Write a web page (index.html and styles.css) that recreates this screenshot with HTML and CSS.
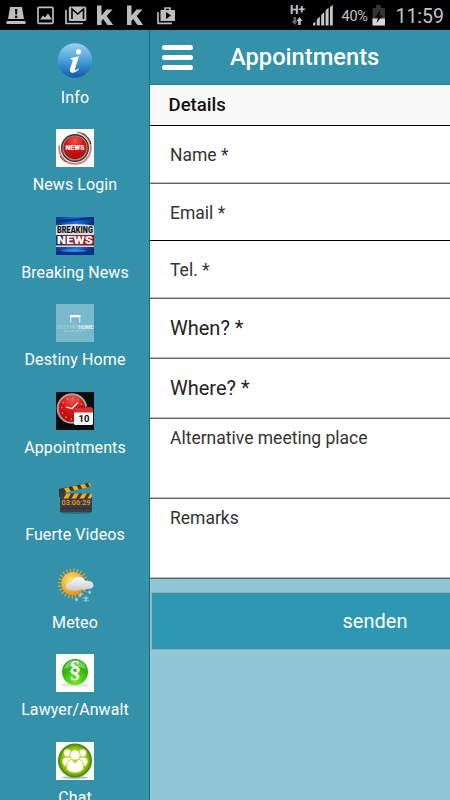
FILE: index.html
```
<!DOCTYPE html>
<html lang="en">
<head>
    <meta charset="UTF-8">
    <meta name="viewport" content="width=device-width, initial-scale=1">
    <title>Appointments</title>
    <link rel="stylesheet" href="styles.css">
</head>
<body>
    <!-- Status bar -->
    <div class="status-bar">
        <svg class="status-icons" width="180" height="30" viewBox="0 0 180 30" fill="#bdbdbd">
            <path d="M10 7h12l2 12H8z"/>
            <path d="M6.500 21h19v3h-19z"/>
            <path d="M15 9h2.400l-.4 5.500h-1.600zM15 15.800h2.300V18H15z" fill="#000"/>
            <rect x="38" y="7.300" width="15" height="16" rx="1" fill="none" stroke="#bdbdbd" stroke-width="1.700"/>
            <path d="M40 19.500l3-4 2 2 3-4 4 6z"/>
            <path d="M66 10v13.500h17" fill="none" stroke="#bdbdbd" stroke-width="1.700"/>
            <rect x="68.800" y="6.500" width="17.500" height="14.500" rx="1.500"/>
            <path d="M72 19V9l5.700 5L83.500 9v10" fill="none" stroke="#000" stroke-width="1.600"/>
            <path d="M97 5.500h4.500v10l5-6h6l-5.800 6.600 6.500 8.900h-5.800l-4.200-6-1.700 1.800V25H97z"/>
            <path d="M127 5.500h4.500v10l5-6h6l-5.800 6.600 6.500 8.900h-5.800l-4.200-6-1.700 1.800V25H127z"/>
            <path d="M158 12v11.300h14" fill="none" stroke="#bdbdbd" stroke-width="1.700"/>
            <path d="M160.500 10h14.500v11h-14.500z"/>
            <path d="M165 10V8h5v2" fill="none" stroke="#bdbdbd" stroke-width="1.700"/>
            <path d="M166 12l5 3.500-5 3.500z" fill="#000"/>
        </svg>
        <div class="status-right">
            <svg width="48" height="30" viewBox="0 0 48 30" fill="#c8c8c8">
                <text class="network" x="3" y="14">H+</text>
                <path d="M6.500 17h2.500v4h1.800L7.800 25l-3.300-4h2z" fill="#666"/>
                <path d="M11.200 25v-4H9.500l3-4 3 4h-1.800v4z"/>
                <path d="M26 25.500v-2l2.300-2v4zM29.800 25.500v-6l3-3v9zM34.200 25.500V15l3-3v13.500zM38.600 25.500v-15l3-3v18zM43 25.500V7l2.800-2v20.500z"/>
            </svg>
            <span class="percent">40%</span>
            <svg class="battery" width="14" height="21" viewBox="0 0 14 21">
                <path d="M4 0h5v3h4v17.500H.5V3H4z" fill="#333"/>
                <path d="M.5 13.500H13v7H.5z" fill="#d6d6d6"/>
                <path d="M8.500 5L3 12.500h3.200L4.500 18l6-7.500H7.200z" fill="#000"/>
            </svg>
            <span class="clock">11:59</span>
        </div>
    </div>

    <div class="app">
        <!-- Side menu -->
        <nav class="sidebar">
            <a class="menu-item">
                <svg class="menu-icon" viewBox="0 0 38 38">
                    <defs>
                        <linearGradient id="blue" x1="0" y1="0" x2="0" y2="1">
                            <stop offset="0" stop-color="#9ad0f2"/>
                            <stop offset=".5" stop-color="#4b9edb"/>
                            <stop offset="1" stop-color="#1258a8"/>
                        </linearGradient>
                    </defs>
                    <circle cx="19" cy="18.500" r="17.200" fill="url(#blue)"/>
                    <circle cx="22.500" cy="9.800" r="2.600" fill="#fff"/>
                    <path d="M14.500 16.200q5-.9 8.500-2.200l-4 13q-.5 2.600 3.200-.7l.7.600q-4 4.700-7.500 3.600-2.300-1-1.300-4l2.700-8q.5-1.500-2.600-1.300z" fill="#fff"/>
                </svg>
                <span>Info</span>
            </a>
            <a class="menu-item">
                <svg class="menu-icon" viewBox="0 0 38 38">
                    <defs>
                        <radialGradient id="red" cx=".5" cy=".2" r=".8">
                            <stop offset="0" stop-color="#f0544c"/>
                            <stop offset=".5" stop-color="#d51212"/>
                            <stop offset="1" stop-color="#b00c0c"/>
                        </radialGradient>
                    </defs>
                    <rect width="38" height="38" fill="#fff"/>
                    <circle cx="19" cy="19" r="15.800" fill="none" stroke="#e47b7b" stroke-width="2" stroke-dasharray="52 24"/>
                    <path d="M26 4a16.500 16.500 0 0 1 9 11M4 27a16.500 16.500 0 0 0 6 6" fill="none" stroke="#333" stroke-width="1"/>
                    <circle cx="19" cy="19" r="14" fill="#333"/>
                    <circle cx="19" cy="19" r="12.600" fill="#999"/>
                    <circle cx="19" cy="18.700" r="11.500" fill="url(#red)"/>
                    <text class="news-text" x="9.500" y="21.300" textLength="19" lengthAdjust="spacingAndGlyphs">NEWS</text>
                </svg>
                <span>News Login</span>
            </a>
            <a class="menu-item">
                <svg class="menu-icon" viewBox="0 0 38 38">
                    <defs>
                        <linearGradient id="night" x1="0" y1="0" x2="1" y2="0">
                            <stop offset="0" stop-color="#123a86"/>
                            <stop offset=".55" stop-color="#147bd8"/>
                            <stop offset="1" stop-color="#082a6d"/>
                        </linearGradient>
                        <linearGradient id="banner" x1="0" y1="0" x2="1" y2="0">
                            <stop offset="0" stop-color="#25306e"/>
                            <stop offset=".5" stop-color="#9a2530"/>
                            <stop offset="1" stop-color="#a80f1a"/>
                        </linearGradient>
                    </defs>
                    <rect width="38" height="38" fill="url(#night)"/>
                    <path d="M0 3l38-3v2L0 6zM0 35q19-5 38-1v4H0z" fill="#0b2d92"/>
                    <path d="M4 34q14-4 28 0-14 2-28 0z" fill="#2d8df0"/>
                    <path d="M0 8.500q19-3 38 0v9.500H0z" fill="#d9dce4"/>
                    <path d="M0 18h38v10.500H0z" fill="url(#banner)"/>
                    <path d="M0 28.500h38v1.500H0z" fill="#d8d4e4"/>
                    <text class="breaking-text" x="1" y="16.300" textLength="36" lengthAdjust="spacingAndGlyphs">BREAKING</text>
                    <text class="breaking-news" x="1" y="27.300" textLength="36" lengthAdjust="spacingAndGlyphs">NEWS</text>
                </svg>
                <span>Breaking News</span>
            </a>
            <a class="menu-item">
                <svg class="menu-icon" viewBox="0 0 38 38">
                    <rect width="38" height="38" fill="#7ab9cc"/>
                    <path d="M14 11h10.500v2.300H14z" fill="#fff"/>
                    <path d="M14.800 13v5.500M23.700 13v5.500" stroke="#d6ebf0" stroke-width="1.200"/>
                    <text class="destiny" x=".5" y="24.500" textLength="37" lengthAdjust="spacingAndGlyphs">DESTINY<tspan class="destiny-home">HOME</tspan></text>
                    <path d="M8 27h22" stroke="#b2d8e2" stroke-width=".8" stroke-dasharray="2 .6"/>
                </svg>
                <span>Destiny Home</span>
            </a>
            <a class="menu-item">
                <svg class="menu-icon" viewBox="0 0 38 38">
                    <rect width="38" height="38" fill="#0c0c0e"/>
                    <circle cx="16" cy="16.500" r="14.300" fill="url(#red)" stroke="#a4a4a4" stroke-width="2"/>
                    <circle cx="16" cy="16.500" r="10.500" fill="none" stroke="#f5a0a0" stroke-width="1.300" stroke-dasharray="1.300 4.200"/>
                    <path d="M10 15l6 1.500 6-6" fill="none" stroke="#fff" stroke-width="1.200"/>
                    <rect x="18" y="16.500" width="19" height="16.500" rx="1.500" fill="#f6f6f6"/>
                    <path d="M18 20.500V17q0-2 2-2h15q2 0 2 2v3.500z" fill="#d82f2f"/>
                    <path d="M20 15h16" stroke="#741515" stroke-width="2" stroke-dasharray="1 1.600"/>
                    <text class="calendar-day" x="28" y="30.200">10</text>
                </svg>
                <span>Appointments</span>
            </a>
            <a class="menu-item">
                <svg class="menu-icon" viewBox="0 0 38 38">
                    <ellipse cx="20" cy="33.500" rx="16" ry="1.500" fill="#23717f"/>
                    <path d="M3 10L34 3.500l1 4L9 13.500 8 18H3z" fill="#34373d"/>
                    <path d="M4 14.500h32v18.500H4z" fill="#3b3e46"/>
                    <path d="M8 9.200l4.500-.9 2.500 4.200-4.500 1zM16 7.500l4.500-.9 2.500 4-4.500 1zM24 5.800l4.500-1 2.500 4-4.500 1zM32 4.200l2.300-.5.700 4-1 .3zM10.500 14.500H15l-3 5H7.500zM18.500 14.500H23l-3 5h-4.500zM26.500 14.500H31l-3 5h-4.500zM34.500 14.500H36v3l-1.300 2h-3.200z" fill="#f2ab17"/>
                    <text class="timecode" x="5.500" y="26.300" textLength="29" lengthAdjust="spacingAndGlyphs">03:06:29</text>
                    <path d="M5 29h30" stroke="#252830" stroke-width="1"/>
                </svg>
                <span>Fuerte Videos</span>
            </a>
            <a class="menu-item">
                <svg class="menu-icon" viewBox="0 0 38 38">
                    <defs>
                        <radialGradient id="sun" cx=".4" cy=".35" r=".7">
                            <stop offset="0" stop-color="#ffe27a"/>
                            <stop offset="1" stop-color="#ef8e0b"/>
                        </radialGradient>
                        <linearGradient id="cloud" x1="0" y1="0" x2="0" y2="1">
                            <stop offset="0" stop-color="#fff"/>
                            <stop offset="1" stop-color="#c8c8d0"/>
                        </linearGradient>
                    </defs>
                    <circle cx="17" cy="16.500" r="13" fill="none" stroke="#e6a32a" stroke-width="4.500" stroke-dasharray="1.200 2.200"/>
                    <circle cx="17" cy="16.500" r="11.500" fill="url(#sun)"/>
                    <path d="M17 23.500q-7 0-7-4 0-4 5.500-4 2-6 7.500-5.500 5 .2 6 4 8-.8 8.500 4 .2 4.500-6.500 4-2 1.500-5.500.5-3 1.500-8.500 1z" fill="url(#cloud)"/>
                    <path d="M30 29v6M27.400 30.500l5.200 3M32.600 30.500l-5.200 3M20.500 31v3M19 32.500h3M24.500 26v3.500M22.800 27.700h3.500M33.500 23.500v3.500M31.800 25.200h3.500" stroke="#a9c9dc" stroke-width="1.300"/>
                </svg>
                <span>Meteo</span>
            </a>
            <a class="menu-item">
                <svg class="menu-icon" viewBox="0 0 38 38">
                    <defs>
                        <radialGradient id="green" cx=".5" cy=".85" r=".8">
                            <stop offset="0" stop-color="#7de62b"/>
                            <stop offset=".6" stop-color="#35bd12"/>
                            <stop offset="1" stop-color="#239c12"/>
                        </radialGradient>
                    </defs>
                    <rect width="38" height="38" fill="#fff"/>
                    <ellipse cx="19" cy="31" rx="14" ry="1.600" fill="#d9e8d0"/>
                    <circle cx="19" cy="18" r="13" fill="url(#green)"/>
                    <path d="M8 15Q10 6 19 6t11 9q-11-5-22 0z" fill="#9be47e" opacity=".65"/>
                    <text class="paragraph" x="19" y="23.300">§</text>
                </svg>
                <span>Lawyer/Anwalt</span>
            </a>
            <a class="menu-item">
                <svg class="menu-icon" viewBox="0 0 38 38">
                    <defs>
                        <radialGradient id="lime">
                            <stop offset="0" stop-color="#c8e000"/>
                            <stop offset=".75" stop-color="#9bc60a"/>
                            <stop offset="1" stop-color="#4f9409"/>
                        </radialGradient>
                    </defs>
                    <rect width="38" height="38" fill="#fff"/>
                    <ellipse cx="19" cy="35.500" rx="13" ry="1.500" fill="#bbb"/>
                    <circle cx="19" cy="18.500" r="16.200" fill="url(#lime)" stroke="#458d0c" stroke-width="1.600"/>
                    <g fill="#fff" stroke="#a8cf08" stroke-width=".8">
                        <path d="M6 20q0-5 6-5 5 0 6 5v4H8zM32 20q0-5-6-5-5 0-6 5v4h10z"/>
                        <circle cx="11.500" cy="11" r="4"/>
                        <circle cx="26.500" cy="11" r="4"/>
                        <path d="M10.500 27q-.5-9 5-9.500l3.500 3.500 3.500-3.500q5.500.5 5 9.500-3.500 4-8.500 4t-8.500-4z"/>
                        <circle cx="19" cy="13" r="5.200"/>
                    </g>
                </svg>
                <span>Chat</span>
            </a>
        </nav>

        <!-- Appointment form, pushed to the right by the menu -->
        <main class="page">
            <header class="page-header">
                <div class="hamburger">
                    <i></i>
                    <i></i>
                    <i></i>
                </div>
                <h1>Appointments</h1>
            </header>
            <h2 class="details">Details</h2>
            <div class="row">Name *</div>
            <div class="row row-solid">Email *</div>
            <div class="row">Tel. *</div>
            <div class="row row-select">When? *</div>
            <div class="row row-select">Where? *</div>
            <div class="row row-area">Alternative meeting place</div>
            <div class="row row-area">Remarks</div>
            <button class="send-button">senden</button>
        </main>
    </div>
</body>
</html>
```
FILE: styles.css
```
* {
    box-sizing: border-box;
}

body {
    margin: 0;
    width: 450px;
    height: 800px;
    overflow: hidden;
    font-family: Roboto, "Liberation Sans", sans-serif;
}

/* Status bar */
.status-bar {
    display: flex;
    justify-content: space-between;
    height: 30px;
    background-color: #000;
    color: #c4c4c4;
}

.status-right {
    display: flex;
    align-items: center;
    padding-right: 6px;
}

.network {
    font-size: 12px;
    font-weight: 700;
}

.percent {
    width: 28px;
    margin-left: 6px;
    padding-top: 3px;
    font-size: 14.5px;
    letter-spacing: -0.2px;
}

.battery {
    margin: 0 9px 0 3px;
}

.clock {
    padding-top: 2px;
    font-size: 19.5px;
}

.app {
    display: flex;
    height: 770px;
    overflow: hidden;
}

/* Side menu */
.sidebar {
    flex: none;
    width: 150px;
    padding-top: 11.5px;
    background-color: #3391a9;
    border-right: 1px solid #136f88;
}

.menu-item {
    display: flex;
    flex-direction: column;
    align-items: center;
    height: 87.5px;
    padding-left: 1px;
    color: #fff;
    font-size: 16px;
    line-height: 20px;
    letter-spacing: 0.1px;
}

.menu-icon {
    width: 38px;
    height: 38px;
    margin-bottom: 8px;
}

/* Lettering inside the menu icons */
.news-text {
    font-size: 7px;
    font-weight: 900;
    fill: #fff;
}

.breaking-text {
    font-size: 9px;
    font-weight: 900;
    fill: #111;
}

.breaking-news {
    font-size: 11px;
    font-weight: 900;
    fill: #fff;
}

.destiny {
    font-size: 5.5px;
    fill: #a8d2de;
}

.destiny-home {
    font-weight: 700;
    fill: #e6f3f6;
}

.calendar-day {
    font-size: 9.5px;
    font-weight: 700;
    fill: #111;
    text-anchor: middle;
}

.timecode {
    font-size: 6.5px;
    font-weight: 500;
    fill: #f09a1a;
}

.paragraph {
    font-family: "Liberation Serif", serif;
    font-size: 24px;
    font-weight: 700;
    fill: #fff;
    text-anchor: middle;
}

/* Page */
.page {
    flex: none;
    width: 450px;
    background-color: #90c9d5;
}

.page-header {
    display: flex;
    align-items: center;
    height: 55px;
    padding-left: 12px;
    background-color: #3391a9;
    border-bottom: 1px solid #14829c;
}

.hamburger {
    display: flex;
    flex-direction: column;
    gap: 5px;
    width: 31px;
}

.hamburger i {
    height: 5px;
    border-radius: 2.5px;
    background-color: #fff;
}

.page-header h1 {
    margin: 0 0 0 37px;
    color: #fff;
    font-size: 23.7px;
    font-weight: 500;
}

.details {
    height: 41px;
    margin: 0;
    padding-left: 18.5px;
    background-color: #f8f8f8;
    border-bottom: 1px solid #000;
    color: #111;
    font-size: 18.6px;
    font-weight: 500;
    line-height: 40px;
}

/* Form rows */
.row {
    height: 58px;
    padding-left: 20px;
    background-color: #fff;
    border-bottom: 1px solid #666;
    box-shadow: inset 0 -1px #bbb;
    color: #333;
    font-size: 17.5px;
    line-height: 58px;
}

.row-solid {
    height: 57px;
    border-bottom-color: #000;
    box-shadow: none;
}

.row-select {
    height: 60px;
    color: #222;
    font-size: 20px;
}

.row-area {
    height: 80px;
    line-height: 38px;
}

.send-button {
    display: block;
    width: 448px;
    height: 58px;
    margin: 13px 1px 0;
    padding: 0;
    border: 1px solid #a3aaaf;
    background-color: #2e97b1;
    color: #fff;
    font-family: inherit;
    font-size: 20px;
}
```
